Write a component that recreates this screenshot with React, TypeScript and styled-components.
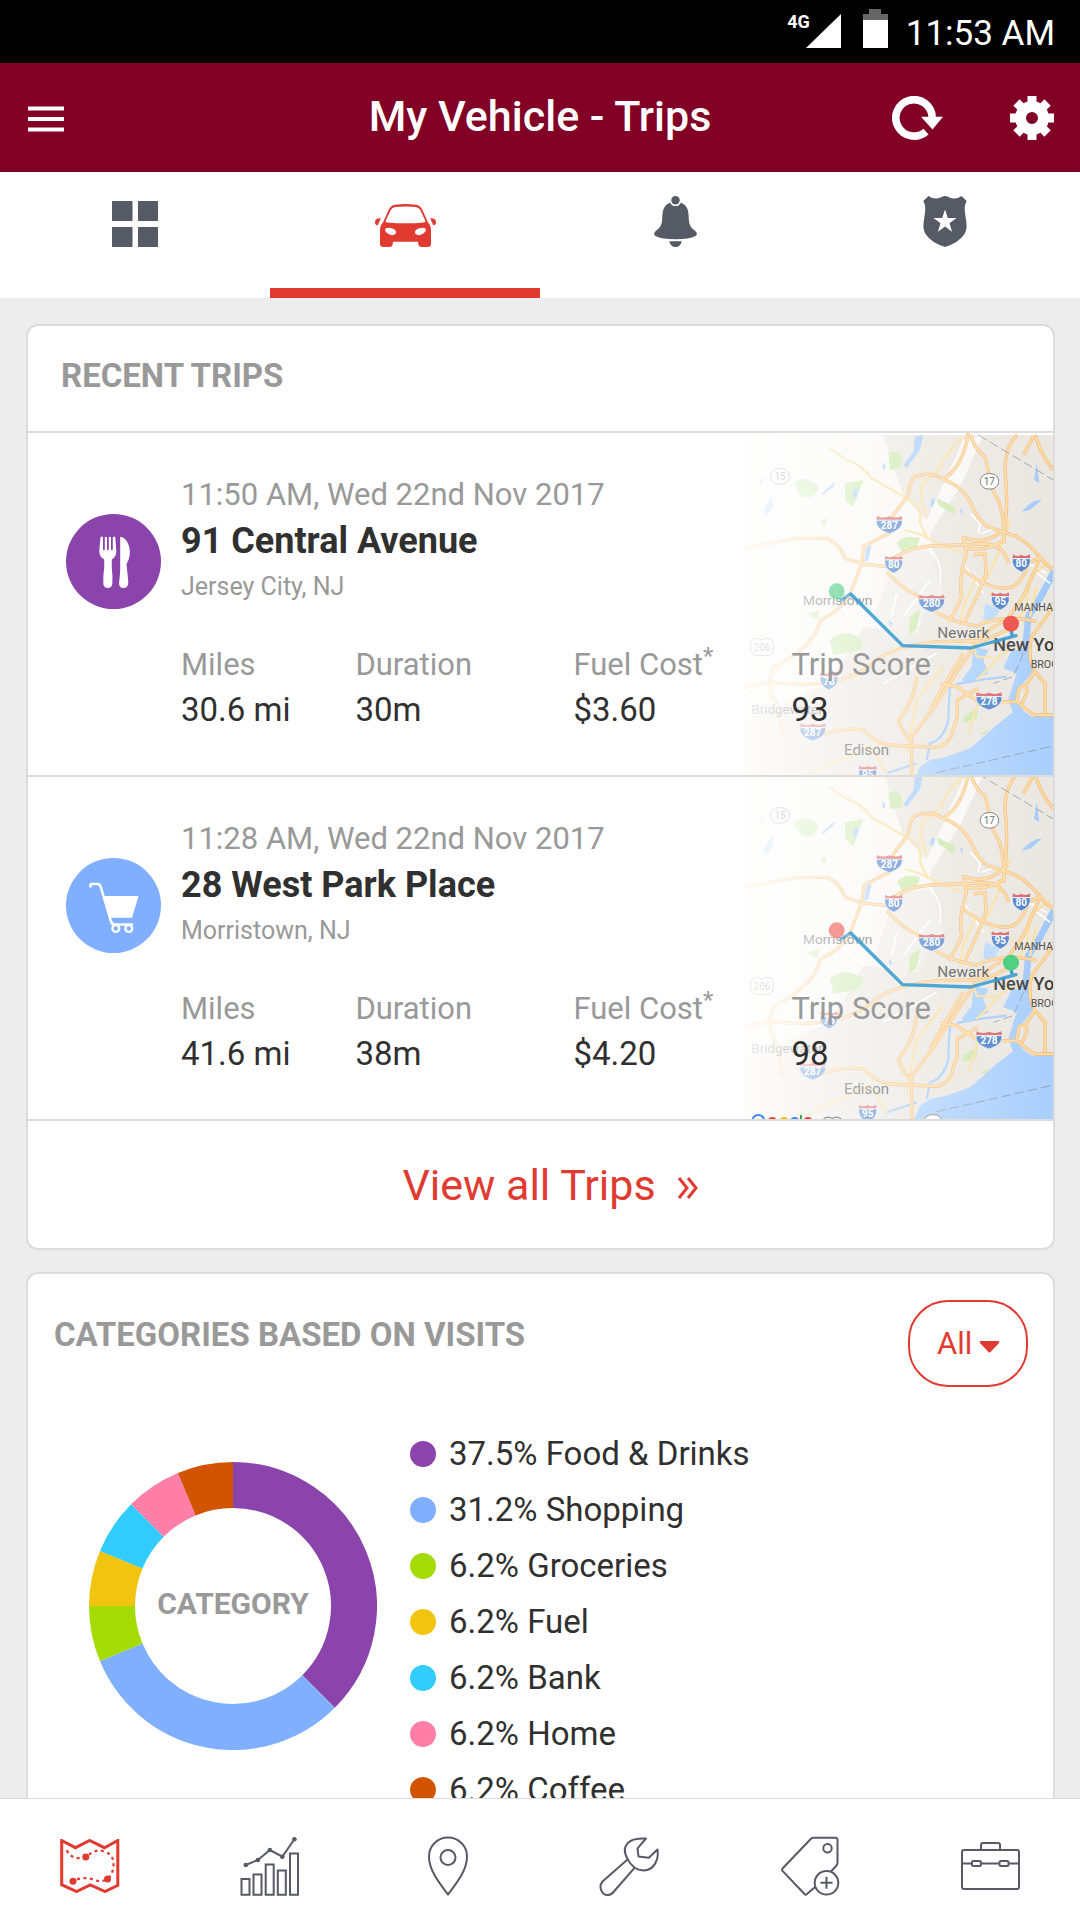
import React, { useState } from "react";
import styled, { createGlobalStyle } from "styled-components";

const color = {
  brand: "#820026",
  accent: "#e03a31",
  ink: "#303030",
  muted: "#999999",
  icon: "#565a64",
  line: "#dcdcdc",
  page: "#ededed",
};

const GlobalStyle = createGlobalStyle`
  *, *::before, *::after { box-sizing: border-box; }
  body { margin: 0; font-family: Roboto, "Liberation Sans", sans-serif; color: ${color.ink}; background: ${color.page}; }
  h1, h2, h3, p, ul, dl, dd { margin: 0; padding: 0; }
  ul { list-style: none; }
  button { font: inherit; color: inherit; background: none; border: 0; padding: 0; cursor: pointer; }
  svg { display: block; }
`;

const Screen = styled.div`
  display: flex;
  flex-direction: column;
  height: 100vh;
`;

/* ---------- Status bar ---------- */

const StatusBar = styled.div`
  display: flex;
  justify-content: flex-end;
  align-items: flex-start;
  gap: 18px;
  flex: none;
  height: 63px;
  padding: 9px 25px 0;
  background: #000;
  color: #fff;
`;

const Signal = styled.div`
  display: flex;
  padding: 2px 4px 0 0;
`;

const Network = styled.span`
  font-size: 18px;
  font-weight: 700;
  line-height: 22px;
  margin-right: -4px;
`;

const Clock = styled.time`
  font-size: 35px;
  line-height: 50px;
`;

/* ---------- App header ---------- */

const Header = styled.header`
  display: grid;
  grid-template-columns: 1fr auto 1fr;
  align-items: center;
  flex: none;
  height: 109px;
  padding: 0 26px;
  background: ${color.brand};
  color: #fff;
`;

const HeaderTitle = styled.h1`
  font-size: 43px;
  font-weight: 500;
  line-height: 50px;
  padding-bottom: 4px;
`;

const HeaderActions = styled.div`
  display: flex;
  justify-content: flex-end;
  gap: 66px;
`;

const IconButton = styled.button`
  justify-self: start;
`;

/* ---------- Tabs ---------- */

const Tabs = styled.nav`
  display: flex;
  flex: none;
  height: 126px;
  background: #fff;
`;

const Tab = styled.button<{ $active: boolean }>`
  display: flex;
  flex: 1;
  justify-content: center;
  align-items: flex-end;
  padding-bottom: 41px;
  border-bottom: 10px solid ${(p) => (p.$active ? color.accent : "transparent")};
  color: ${(p) => (p.$active ? color.accent : color.icon)};
`;

/* ---------- Cards ---------- */

const Content = styled.main`
  display: flex;
  flex-direction: column;
  gap: 22px;
  flex: 1;
  min-height: 0;
  padding: 26px 25px 26px 26px;
  overflow-y: auto;
  scrollbar-width: none;
`;

const Card = styled.section`
  flex: none;
  background: #fff;
  border: 2px solid ${color.line};
  border-radius: 12px;
  overflow: hidden;
`;

const CardTitle = styled.h2`
  font-size: 33px;
  font-weight: 700;
  line-height: 46px;
  color: ${color.muted};
`;

const CardHeader = styled.div`
  padding: 27px 33px 32px;
  border-bottom: 2px solid ${color.line};
`;

/* ---------- Trips ---------- */

const TripRow = styled.article`
  position: relative;
  display: grid;
  grid-template-columns: 95px 1fr;
  column-gap: 20px;
  padding: 39px 0 43px 38px;
  border-bottom: 2px solid ${color.line};
`;

const MapLayer = styled.div`
  position: absolute;
  inset: 0 0 0 auto;
  width: 309px;

  svg { width: 100%; height: 100%; }
`;

const TripIcon = styled.div<{ $fill: string }>`
  width: 95px;
  height: 95px;
  margin-top: 42px;
  border-radius: 50%;
  background: ${(p) => p.$fill};
`;

const TripBody = styled.div`
  position: relative;
`;

const TripDate = styled.p`
  font-size: 31px;
  line-height: 46px;
  color: ${color.muted};
`;

const TripAddress = styled.h3`
  font-size: 36px;
  font-weight: 700;
  line-height: 46px;
`;

const TripCity = styled.p`
  font-size: 25px;
  line-height: 46px;
  color: ${color.muted};
`;

const Stats = styled.dl`
  display: grid;
  grid-template-columns: 4fr 5fr 5fr 6fr;
  margin-top: 32px;
`;

const StatLabel = styled.dt`
  font-size: 31px;
  line-height: 45px;
  color: ${color.muted};
`;

const StatValue = styled.dd`
  font-size: 33px;
  line-height: 45px;
`;

const Footnote = styled.sup`
  font-size: 24px;
  line-height: 0;
`;

const ViewAll = styled.a`
  display: flex;
  justify-content: center;
  align-items: center;
  gap: 21px;
  height: 127px;
  padding-left: 20px;
  font-size: 43px;
  line-height: 50px;
  color: ${color.accent};
  text-decoration: none;
`;

/* ---------- Categories ---------- */

const CategoryHeader = styled.div`
  display: flex;
  justify-content: space-between;
  align-items: flex-start;
  padding: 26px 25px 39px 26px;

  ${CardTitle} { padding-top: 12px; }
`;

const Filter = styled.label`
  display: grid;
  align-items: center;
  color: ${color.accent};

  > * { grid-area: 1 / 1; }
  > svg { justify-self: end; margin-right: 28px; pointer-events: none; }
`;

const FilterSelect = styled.select`
  appearance: none;
  width: 120px;
  height: 87px;
  padding: 0 48px 0 27px;
  border: 2px solid ${color.accent};
  border-radius: 40px;
  background: transparent;
  color: ${color.accent};
  font: 400 31px/46px Roboto, "Liberation Sans", sans-serif;
`;

const CategoryBody = styled.div`
  display: flex;
  align-items: flex-start;
  gap: 33px;
  padding: 0 26px 40px 61px;
`;

const Donut = styled.figure`
  display: grid;
  place-items: center;
  flex: none;
  margin: 36px 0 0;

  > * { grid-area: 1 / 1; }
`;

const DonutLabel = styled.figcaption`
  font-size: 30px;
  font-weight: 700;
  line-height: 36px;
  padding-bottom: 5px;
  color: ${color.muted};
`;

const Legend = styled.ul`
  flex: 1;
`;

const LegendItem = styled.li`
  display: flex;
  align-items: center;
  gap: 13px;
  height: 56px;
  font-size: 33px;
  line-height: 46px;
`;

const Dot = styled.span<{ $fill: string }>`
  width: 26px;
  height: 26px;
  border-radius: 50%;
  background: ${(p) => p.$fill};
`;

/* ---------- Bottom navigation ---------- */

const BottomNav = styled.nav`
  display: flex;
  flex: none;
  height: 122px;
  background: #fff;
  border-top: 1px solid ${color.line};
`;

const NavItem = styled.button<{ $active: boolean }>`
  display: flex;
  flex: 1;
  justify-content: center;
  align-items: center;
  padding-top: 12px;
  color: ${(p) => (p.$active ? color.accent : color.icon)};
`;

/* ---------- Icons ---------- */

const MenuIcon = () => (
  <svg width="40" height="28" viewBox="0 0 40 28" fill="#fff">
    <path d="M2 2.500h36v4H2zM2 13h36v4H2zM2 23.500h36v4H2z" />
  </svg>
);

const RefreshIcon = () => (
  <svg width="52" height="44" viewBox="0 0 52 44">
    <path d="M40.2 21A18.2 18.2 0 1 0 34 35.6" fill="none" stroke="#fff" strokeWidth="7.6" />
    <path d="M29 20.7H51L40.5 33.5Z" fill="#fff" />
  </svg>
);

const GearIcon = () => (
  <svg width="44" height="44" viewBox="0 0 44 44" fill="#fff">
    <circle cx="22" cy="22" r="11.5" fill="none" stroke="#fff" strokeWidth="11" />
    {[0, 45, 90, 135, 180, 225, 270, 315].map((a) => (
      <rect key={a} x="17.5" y="0" width="9" height="9" transform={`rotate(${a} 22 22)`} />
    ))}
  </svg>
);

const GridIcon = () => (
  <svg width="46" height="46" viewBox="0 0 46 46" fill="currentColor">
    <path d="M0 0h20.500v20H0zM26 0h20v20H26zM0 26h20.500v20H0zM26 26h20v20H26z" />
  </svg>
);

const CarIcon = () => (
  <svg width="61" height="43" viewBox="0 0 61 43" fill="currentColor">
    <path
      fillRule="evenodd"
      d="M20 .8Q30.500 -.8 41 .8Q45.500 1.500 47.500 6L53 18.500Q56 21.500 56 26V40Q56 43 52.500 43H47Q43.500 43 43.300 40L43 37.700H18L17.700 40Q17.500 43 14 43H8.500Q5 43 5 40V26Q5 21.500 8 18.500L13.500 6Q15.500 1.500 20 .8ZM20 3Q16.800 3.600 15.500 6.500L10.800 16.500Q10.200 18.400 12 18.500Q30.500 20.200 49 18.500Q50.800 18.400 50.200 16.500L45.500 6.500Q44.200 3.600 41 3Q30.500 1.800 20 3ZM10.500 24.500Q9.400 27 12 29Q15.500 32 19 30.800Q21.500 30 21 27.500Q20.500 25.300 17.500 24.500Q13 23.200 10.500 24.500ZM50.500 24.500Q48 23.200 43.500 24.500Q40.500 25.300 40 27.500Q39.500 30 42 30.800Q45.500 32 49 29Q51.600 27 50.500 24.500Z"
    />
    <path d="M5.800 14.300Q0 14 0 18.500Q0 21.300 2.800 21.300ZM55.200 14.300Q61 14 61 18.500Q61 21.300 58.200 21.300Z" />
  </svg>
);

const BellIcon = () => (
  <svg width="43" height="51" viewBox="0 0 43 51" fill="currentColor">
    <circle cx="21.500" cy="4.200" r="4.200" />
    <path d="M16 6.500Q8.300 10 8.300 20C8.300 29 6.500 31.500 1.500 35.200Q-1.200 38 1.500 40Q7.500 43.300 21.500 43.300Q35.500 43.300 41.500 40Q44.200 38 41.500 35.200C36.500 31.500 34.700 29 34.700 20Q34.700 10 27 6.500A6 6 0 0 1 16 6.500ZM15.300 45.200H27.700Q26.500 51 21.500 51Q16.500 51 15.300 45.200Z" />
  </svg>
);

const BadgeIcon = () => (
  <svg width="44" height="51" viewBox="0 0 44 51" fill="currentColor">
    <path
      fillRule="evenodd"
      d="M5.500 0Q11 4 17 1.800Q22 -1.600 27 1.800Q33 4 38.500 0L43.700 5C41 9.500 41.500 15 42.600 21C43.600 27 44.500 33 41.500 38Q36 46.500 22 51Q8 46.500 2.500 38C-.5 33 .4 27 1.400 21C2.500 15 3 9.500 .3 5ZM22 13.500L19.200 22H10.500L17.500 27.200L14.900 35.700L22 30.500L29.100 35.700L26.500 27.200L33.500 22H24.800Z"
    />
  </svg>
);

const ForkKnifeIcon = () => (
  <svg width="95" height="95" viewBox="0 0 95 95" fill="#fff">
    <path d="M34.500 23Q36.300 21.800 37 23.500V35.500Q38 37 38.800 35.500V23.500Q39.800 21.800 41 23.500V35.500Q41.800 37 42.800 35.500V23.500Q43.800 21.800 45 23.500V35.500Q46 37 46.800 35.500V23.500Q47.800 21.800 49.300 23L50.300 37Q50.300 43 45.800 45.500V54Q46.800 62 46.300 70Q45.500 74 41.800 74Q38 74 37.300 70Q37 62 38.200 54V45.500Q33.300 43 33.300 37Z" />
    <path d="M54.200 22.700Q60 23 63 32Q65.500 42 60.500 50L62.300 68Q62.300 74 57.500 74Q53 74 53 69Q54.500 58 54.200 50Z" />
  </svg>
);

const CartIcon = () => (
  <svg width="95" height="95" viewBox="0 0 95 95">
    <path d="M24.500 29.500V27Q24.500 26 26 26H31.500Q34 26 34.800 29L45 63.500Q46 66.500 49 66.500H67" fill="none" stroke="#fff" strokeWidth="2.500" />
    <path d="M38.500 38H72.500L66 59.800H44.600Z" fill="#fff" />
    <g fill="none" stroke="#fff" strokeWidth="2.400">
      <circle cx="49.800" cy="70.500" r="3.400" />
      <circle cx="62.800" cy="70.500" r="3.400" />
    </g>
  </svg>
);

const ChevronsIcon = () => (
  <svg width="22" height="28" viewBox="0 0 22 28" fill="none" stroke="currentColor" strokeWidth="3">
    <path d="M2 7L10 17L2 27M11 7L19 17L11 27" />
  </svg>
);

const CaretIcon = () => (
  <svg width="21" height="18" viewBox="0 0 21 18" fill="currentColor">
    <path d="M1.500 6H19.500Q21 6.800 20 8L11.500 17Q10.500 18 9.500 17L1 8Q0 6.800 1.500 6Z" />
  </svg>
);

const RouteMapIcon = () => (
  <svg width="60" height="54" viewBox="0 0 60 54" fill="none" stroke="currentColor">
    <path strokeWidth="3" d="M1.700 1.500L15.400 8.700L29.600 1.500L44.400 8.700L57.800 1.500V46.300L45 52.500L30.300 46L16.500 52.500L1.700 45.700Z" />
    <path strokeWidth="2.200" strokeDasharray="3 3.500" d="M6.800 11.300Q12 22 25.800 18Q36 9 44 12.500Q53 15 53.500 24Q54 34 47.500 40Q40 44 33.500 40.500Q22 37 13 42.300" />
    <g fill="currentColor" stroke="none">
      <circle cx="25.800" cy="18" r="3.500" />
      <circle cx="13" cy="42.300" r="3.500" />
      <circle cx="47.500" cy="40" r="3.500" />
    </g>
  </svg>
);

const ChartIcon = () => (
  <svg width="60" height="60" viewBox="0 0 60 60" fill="none" stroke="currentColor" strokeWidth="2">
    <path d="M1.500 43h8v15.700h-8zM13.500 38.500h8v20.200h-8zM25.700 28.500h8v30.200h-8zM37.800 34.500h8v24.200h-8zM50 17.500h8v41.200h-8z" />
    <path d="M5.800 29L17.900 24L29.900 14L42.300 20.700L54.400 3.300" />
    <g fill="currentColor" stroke="none">
      <circle cx="5.800" cy="29" r="2.300" />
      <circle cx="17.900" cy="24" r="2.300" />
      <circle cx="29.900" cy="14" r="2.300" />
      <circle cx="42.300" cy="20.700" r="2.300" />
      <circle cx="54.400" cy="3.300" r="2.300" />
    </g>
  </svg>
);

const PinIcon = () => (
  <svg width="44" height="60" viewBox="0 0 44 60" fill="none" stroke="currentColor" strokeWidth="2">
    <path d="M20 58.500C14 50 1 36 1 20.500A19 19 0 0 1 39 20.500C39 36 26 50 20 58.500Z" />
    <circle cx="20" cy="21.500" r="7.500" />
  </svg>
);

const WrenchIcon = () => (
  <svg width="62" height="60" viewBox="0 0 62 60" fill="none" stroke="currentColor" strokeWidth="2" strokeLinejoin="round">
    <path d="M47 2.500L38.500 12.300L39.500 20.500L49.800 21.700L58.500 13.500C60 24 55 34.300 44.300 34.500Q39 34 35.700 31.700Q31 28 28.800 23.300Q25.500 18 25.800 13Q28 1.500 47 2.500Z" />
    <path d="M28.800 23.300L3.500 45.500C-1 51 3 59 8.500 59Q12 59 14.500 56L35.700 31.700" />
  </svg>
);

const TagIcon = () => (
  <svg width="59" height="60" viewBox="0 0 59 60" fill="none" stroke="currentColor" strokeWidth="2" strokeLinejoin="round">
    <path d="M50 35.500L55.500 29.500Q56.500 28.300 56.500 26.500V3.800Q56.500 1.700 54.300 1.700H32.500Q31 1.700 30 2.800L1.500 32.500Q.6 33.700 1.500 34.900L23.500 58Q24.800 59.200 26 58L34 51" />
    <circle cx="46.500" cy="12.300" r="4.200" />
    <circle cx="45.500" cy="46.800" r="11.800" />
    <path d="M39.500 46.800H51.500M45.500 40.800V52.800" />
  </svg>
);

const BriefcaseIcon = () => (
  <svg width="59" height="48" viewBox="0 0 59 48" fill="none" stroke="currentColor" strokeWidth="2">
    <rect x="1" y="8" width="57" height="39" rx="2" />
    <path d="M20 8V3Q20 1 22 1H37Q39 1 39 3V8M1 21.500H11M20 21.500H38.500M47.500 21.500H58" />
    <rect x="11" y="19" width="9" height="5" rx="1.500" />
    <rect x="38.500" y="19" width="9" height="5" rx="1.500" />
  </svg>
);

/* ---------- Map drawing ---------- */

const interstates = [
  { x: 478, y: 313, n: "287" },
  { x: 491, y: 432, n: "80" },
  { x: 874, y: 428, n: "80" },
  { x: 605, y: 549, n: "280" },
  { x: 811, y: 542, n: "95" },
  { x: 777, y: 842, n: "278" },
  { x: 297, y: 782, n: "78" },
  { x: 248, y: 935, n: "287" },
  { x: 413, y: 1062, n: "95" },
];

const highways = [
  "M715 40Q700 140 640 178Q600 152 555 170Q538 185 535 225L490 285L478 340L402 378L395 430L365 510Q350 560 270 602Q255 680 130 742Q115 770 125 830Q150 850 155 950",
  "M280 945Q330 920 400 930Q440 970 480 975L620 982Q665 970 670 925L682 890V840L745 805",
  "M640 178Q700 200 725 255Q745 300 770 318L860 350Q900 370 945 430L970 450",
  "M722 45Q735 90 765 110L790 215Q825 260 822 370",
  "M862 45Q825 80 825 150Q835 240 825 325Q770 380 700 352L710 400Q685 470 695 530Q680 570 655 605",
  "M42 385L200 355H290Q330 370 345 415L400 432L470 440Q500 390 600 378L760 372Q820 370 835 430",
  "M470 455Q520 510 560 525Q620 600 740 618Q820 580 920 605",
  "M730 405L765 400L768 460L745 520L705 605",
  "M700 385Q780 395 820 360M700 450Q790 520 850 500Q880 480 895 430L935 410",
  "M930 415L880 530L830 600Q760 630 725 690L665 780L600 880L545 950V1085",
  "M42 800L130 788Q330 810 420 735Q480 680 620 665L760 662L830 630",
  "M560 770Q550 850 505 900Q515 940 545 960M700 700L640 800L600 870",
  "M630 792L680 800L745 845H860L912 885H970M860 845Q865 790 880 800Q905 800 875 850M885 800L915 755L945 790V880M915 755Q890 710 905 650L970 560M910 50L880 105M915 45Q930 100 970 150",
];

const localRoads = [
  "M300 85L350 120Q390 130 425 175L530 235Q580 260 570 310L595 360",
  "M700 50Q640 110 630 145L578 190Q565 230 590 290",
  "M525 330L575 345Q650 385 700 400M735 480L700 560L690 620",
  "M840 300L805 400L770 480M960 425L900 470L890 560L860 600",
  "M640 740L560 840L530 1000M720 650L740 710L800 715L850 680",
  "M200 1080L420 980L470 1060M50 820Q120 780 150 740",
  "M745 845L715 940M920 500L900 590M780 520L850 545M740 780L800 720",
];

const whiteRoads = [
  "M595 380Q640 430 630 490M500 520L485 590M520 590L600 480",
  "M460 790L620 700M720 280L750 310L745 340M755 340L795 325",
  "M895 430L950 460M910 450L960 490M700 430L760 520M330 560L400 620",
];

const woods = [
  "M190 190Q230 160 265 200Q260 240 215 230Z",
  "M345 190L400 180L370 260L345 240Z",
  "M475 100Q520 80 515 145L480 150Z",
  "M500 370Q520 340 570 355L560 385L520 400Z",
  "M620 235L675 260L672 285L625 255Z",
  "M300 660Q345 620 400 660L390 690L310 705Z",
  "M540 590L570 570L560 630L535 645Z",
  "M270 300L290 295L285 320Z",
  "M230 580L270 570L260 600Z",
  "M700 890L745 860L740 895L700 910Z",
  "M750 940L775 930L765 945Z",
];

const lakes = [
  "M555 50L580 45L570 90L530 145L520 135L550 95Z",
  "M410 380L425 375L415 420L402 425Z",
  "M275 220L315 185L310 200L280 225Z",
  "M100 270L125 230L130 255L110 290Z",
  "M920 130L928 190L912 180Z",
  "M875 275Q910 235 935 240L900 270Z",
  "M605 235L615 240L608 262L600 255Z",
  "M370 210L385 205L380 235L368 230Z",
  "M475 600L488 610L480 620Z",
  "M690 270L700 265L695 285Z",
  "M455 125L468 140L460 150Z",
  "M90 180L100 170L95 200Z",
];

const InterstateShield = ({ x, y, n }: { x: number; y: number; n: string }) => {
  const w = n.length > 2 ? 39 : 27;
  return (
    <g transform={`translate(${x} ${y})`}>
      <path d={`M${-w} -12H${w}Q${w + 3} 15 0 28Q${-w - 3} 15 ${-w} -12Z`} fill="#4a7fc9" stroke="#fff" strokeWidth="2" />
      <path d={`M${-w + 2} -25Q${-w / 2} -16 0 -24Q${w / 2} -16 ${w - 2} -25L${w} -14H${-w}Z`} fill="#d9646a" />
      <text y="13" textAnchor="middle" fontSize="30" fontWeight="700" fill="#fff">{n}</text>
    </g>
  );
};

type MapProps = { id: string; top: number; start: string; end: string };

const TripMap = ({ id, top, start, end }: MapProps) => (
  <svg viewBox={`42 ${top} 927 1026`} preserveAspectRatio="xMinYMin slice" fontFamily="Roboto, sans-serif" aria-hidden="true">
    <defs>
      <linearGradient id={id}>
        <stop offset="0" stopColor="#fff" stopOpacity="0.88" />
        <stop offset="0.12" stopColor="#fff" stopOpacity="0.78" />
        <stop offset="0.25" stopColor="#fff" stopOpacity="0.62" />
        <stop offset="0.45" stopColor="#fff" stopOpacity="0.42" />
        <stop offset="0.7" stopColor="#fff" stopOpacity="0.2" />
        <stop offset="1" stopColor="#fff" stopOpacity="0" />
      </linearGradient>
    </defs>
    <rect x="42" y="45" width="930" height="1060" fill="#eae6e0" />
    <path d="M42 45H460L520 230L590 300L700 60L760 45L690 200L600 340L620 480L560 640L400 620L300 790L42 900Z" fill="#f8f7f5" />
    <path d="M500 400L600 390L640 520L520 660L430 600Z" fill="#eeece7" />
    {woods.map((d) => <path key={d} d={d} fill="#cbe8ab" />)}
    {lakes.map((d) => <path key={d} d={d} fill="#a5cbfb" />)}
    <path d="M970 888L905 890L870 865L850 875L800 915L755 955L720 985L650 1010L600 1020L570 1040L550 1085H970Z" fill="#a9cffd" />
    <path d="M845 690L890 690L915 745L872 800L862 850L880 870L850 880L835 840L850 790L860 760L820 745Z" fill="#a9cffd" />
    <path d="M730 680L775 690L760 720L775 760L710 790L695 780L725 740Z" fill="#a9cffd" />
    <path d="M765 550L810 570L790 600L760 600Z" fill="#b9d8fc" />
    <path d="M972 455L930 535L895 590L885 700" fill="none" stroke="#a0c8fc" strokeWidth="20" />
    <path d="M660 800Q655 870 655 900Q640 960 600 970L590 1020M470 1060L560 1030M680 792L760 778L830 770" fill="none" stroke="#a5cbfb" strokeWidth="7" />
    <g fill="none" stroke="#fff" strokeWidth="5">
      {whiteRoads.map((d) => <path key={d} d={d} />)}
    </g>
    <g fill="none" stroke="#fae0a0" strokeWidth="7" strokeLinejoin="round">
      {localRoads.map((d) => <path key={d} d={d} />)}
    </g>
    <g fill="none" stroke="#f4b870" strokeWidth="10" strokeLinejoin="round">
      {highways.map((d) => <path key={d} d={d} />)}
    </g>
    <g fill="none" stroke="#fedaa4" strokeWidth="6" strokeLinejoin="round">
      {highways.map((d) => <path key={d} d={d} />)}
    </g>
    <path d="M745 45L970 180M620 1058L970 978M880 700L850 770L790 790" fill="none" stroke="#8c98a8" strokeWidth="2.500" strokeDasharray="28 12" />
    {interstates.map((s) => <InterstateShield key={`${s.n}-${s.x}`} {...s} />)}
    <g fill="#fff" stroke="#777" strokeWidth="3">
      <rect x="751" y="161" width="55" height="46" rx="23" />
      <rect x="122" y="146" width="56" height="46" rx="23" />
      <path d="M65 660Q80 650 95 660Q110 650 127 660Q135 695 120 706H72Q56 695 65 660Z" />
      <rect x="582" y="1067" width="54" height="46" rx="23" />
    </g>
    <g fontSize="30" fill="#555" textAnchor="middle">
      <text x="778" y="195">17</text>
      <text x="150" y="180">15</text>
      <text x="96" y="694">206</text>
    </g>
    <g fill="#4c4c4c">
      <text x="219" y="555" fontSize="41">Morristown</text>
      <text x="64" y="882" fontSize="40">Bridgewater</text>
      <text x="622" y="655" fontSize="46">Newark</text>
      <text x="342" y="1006" fontSize="45">Edison</text>
      <text x="853" y="573" fontSize="32">MANHAT</text>
      <text x="902" y="744" fontSize="32">BROO</text>
      <text x="790" y="693" fontSize="54" fontWeight="500" fill="#3b3b3b">New Yo</text>
    </g>
    <rect x="42" y="45" width="930" height="1060" fill={`url(#${id})`} />
    <g fill="none" stroke="#3c9fd0" strokeWidth="10" strokeLinejoin="round" strokeLinecap="round">
      <path d="M333 541L358 524" opacity="0.6" />
      <path d="M362 522L518 677L722 684L858 647" opacity="0.9" />
      <path d="M843 630L846 644" />
    </g>
    <circle cx="320" cy="514" r="24" fill={start} opacity="0.6" />
    <circle cx="843" cy="611" r="24" fill={end} />
    <g fill="none" strokeWidth="6">
      <circle cx="85" cy="1086" r="18" stroke="#4285f4" />
      <circle cx="127" cy="1089" r="12" stroke="#ea4335" />
      <circle cx="162" cy="1089" r="12" stroke="#fbbc05" />
      <circle cx="194" cy="1089" r="12" stroke="#4285f4" />
      <path d="M213 1068V1100" stroke="#34a853" />
      <circle cx="234" cy="1089" r="12" stroke="#ea4335" />
    </g>
    <path d="M282 1110V1078Q295 1070 307 1078Q320 1070 332 1078V1110" fill="#fff" stroke="#777" strokeWidth="3" />
  </svg>
);

/* ---------- Data ---------- */

const trips = [
  {
    id: "trip-a",
    date: "11:50 AM, Wed 22nd Nov 2017",
    address: "91 Central Avenue",
    city: "Jersey City, NJ",
    fill: "#8b44ab",
    Icon: ForkKnifeIcon,
    map: { top: 39, start: "#4fd083", end: "#ee5a52" },
    stats: ["30.6 mi", "30m", "$3.60", "93"],
  },
  {
    id: "trip-b",
    date: "11:28 AM, Wed 22nd Nov 2017",
    address: "28 West Park Place",
    city: "Morristown, NJ",
    fill: "#80afff",
    Icon: CartIcon,
    map: { top: 54, start: "#ee5a52", end: "#4fd083" },
    stats: ["41.6 mi", "38m", "$4.20", "98"],
  },
];

const statLabels = ["Miles", "Duration", "Fuel Cost", "Trip Score"];

const categories = [
  { name: "Food & Drinks", label: "37.5%", share: 37.5, fill: "#8b44ab" },
  { name: "Shopping", label: "31.2%", share: 31.25, fill: "#80afff" },
  { name: "Groceries", label: "6.2%", share: 6.25, fill: "#a4db04" },
  { name: "Fuel", label: "6.2%", share: 6.25, fill: "#f1c40f" },
  { name: "Bank", label: "6.2%", share: 6.25, fill: "#33ccff" },
  { name: "Home", label: "6.2%", share: 6.25, fill: "#ff7fa9" },
  { name: "Coffee", label: "6.2%", share: 6.25, fill: "#d35400" },
];

const tabs = [
  { name: "Dashboard", Icon: GridIcon },
  { name: "My Vehicle", Icon: CarIcon },
  { name: "Alerts", Icon: BellIcon },
  { name: "Safety", Icon: BadgeIcon },
];

const navItems = [
  { name: "Trips", Icon: RouteMapIcon },
  { name: "Reports", Icon: ChartIcon },
  { name: "Locate", Icon: PinIcon },
  { name: "Service", Icon: WrenchIcon },
  { name: "Offers", Icon: TagIcon },
  { name: "Business", Icon: BriefcaseIcon },
];

const DonutChart = () => {
  const point = (pct: number) => {
    const a = (pct / 100) * Math.PI * 2;
    return `${144 + 121 * Math.sin(a)} ${144 - 121 * Math.cos(a)}`;
  };
  let from = 0;
  return (
    <svg width="288" height="288" viewBox="0 0 288 288" fill="none" strokeWidth="46">
      {categories.map((c) => {
        const d = `M${point(from)}A121 121 0 0 1 ${point(from + c.share)}`;
        from += c.share;
        return <path key={c.name} d={d} stroke={c.fill} />;
      })}
    </svg>
  );
};

export default function App() {
  const [tab, setTab] = useState("My Vehicle");
  const [section, setSection] = useState("Trips");

  return (
    <Screen>
      <GlobalStyle />
      <StatusBar>
        <Signal>
          <Network>4G</Network>
          <svg width="35" height="37" viewBox="0 0 35 37">
            <path d="M35 3V37H0Z" fill="#fff" />
          </svg>
        </Signal>
        <svg width="25" height="39" viewBox="0 0 25 39">
          <path d="M6 0h12v5h7v7H0V5h6z" fill="#666" />
          <path d="M0 11h25v28H0z" fill="#fff" />
        </svg>
        <Clock>11:53 AM</Clock>
      </StatusBar>

      <Header>
        <IconButton aria-label="Menu"><MenuIcon /></IconButton>
        <HeaderTitle>My Vehicle - Trips</HeaderTitle>
        <HeaderActions>
          <IconButton aria-label="Refresh"><RefreshIcon /></IconButton>
          <IconButton aria-label="Settings"><GearIcon /></IconButton>
        </HeaderActions>
      </Header>

      <Tabs>
        {tabs.map(({ name, Icon }) => (
          <Tab key={name} $active={name === tab} aria-label={name} onClick={() => setTab(name)}>
            <Icon />
          </Tab>
        ))}
      </Tabs>

      <Content>
        <Card>
          <CardHeader><CardTitle>RECENT TRIPS</CardTitle></CardHeader>
          {trips.map(({ id, date, address, city, fill, Icon, map, stats }) => (
            <TripRow key={id}>
              <MapLayer><TripMap id={id} {...map} /></MapLayer>
              <TripIcon $fill={fill}><Icon /></TripIcon>
              <TripBody>
                <TripDate>{date}</TripDate>
                <TripAddress>{address}</TripAddress>
                <TripCity>{city}</TripCity>
                <Stats>
                  {statLabels.map((label, i) => (
                    <div key={label}>
                      <StatLabel>
                        {label}
                        {label === "Fuel Cost" && <Footnote>*</Footnote>}
                      </StatLabel>
                      <StatValue>{stats[i]}</StatValue>
                    </div>
                  ))}
                </Stats>
              </TripBody>
            </TripRow>
          ))}
          <ViewAll href="#trips">
            View all Trips
            <ChevronsIcon />
          </ViewAll>
        </Card>

        <Card>
          <CategoryHeader>
            <CardTitle>CATEGORIES BASED ON VISITS</CardTitle>
            <Filter>
              <FilterSelect aria-label="Period" defaultValue="All">
                <option>All</option>
              </FilterSelect>
              <CaretIcon />
            </Filter>
          </CategoryHeader>
          <CategoryBody>
            <Donut>
              <DonutChart />
              <DonutLabel>CATEGORY</DonutLabel>
            </Donut>
            <Legend>
              {categories.map((c) => (
                <LegendItem key={c.name}>
                  <Dot $fill={c.fill} />
                  {c.label} {c.name}
                </LegendItem>
              ))}
            </Legend>
          </CategoryBody>
        </Card>
      </Content>

      <BottomNav>
        {navItems.map(({ name, Icon }) => (
          <NavItem key={name} $active={name === section} aria-label={name} onClick={() => setSection(name)}>
            <Icon />
          </NavItem>
        ))}
      </BottomNav>
    </Screen>
  );
}
